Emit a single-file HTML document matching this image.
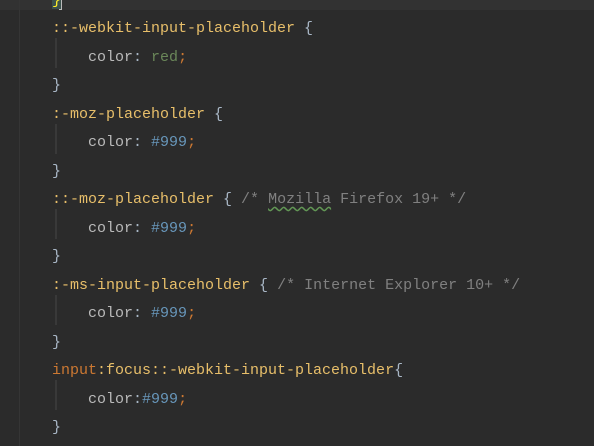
<!DOCTYPE html>
<html><head><style>
html,body{margin:0;padding:0;}
body{width:594px;height:446px;background:#2b2b2b;overflow:hidden;position:relative;font-family:"Liberation Mono",monospace;font-size:15px;}
.top{position:absolute;left:0;top:0;width:594px;height:10px;background:#323232;}
.gut{position:absolute;left:19px;top:0;width:1px;height:446px;background:#353535;}
.code{position:absolute;left:52px;top:-13.5px;}
.l{height:28.5px;line-height:28.5px;white-space:pre;color:#a9b7c6;}
.s{color:#e8bf6a}.o{color:#cc7832}.g{color:#6a8759}.n{color:#6897bb}.c{color:#808080}.p{color:#bababa}
.ig{position:absolute;left:55px;width:2px;background:#393939;}
.hl{background:#3b514d;color:#ffef28}
.w{text-decoration:underline wavy #629755;text-underline-offset:3px;}
</style></head><body>
<div class="top"></div>
<div class="gut"></div>
<div style="position:absolute;left:59px;top:0;width:3px;height:10px;background:#bbb"></div>
<div class="ig" style="top:38px;height:30px"></div>
<div class="ig" style="top:124px;height:30px"></div>
<div class="ig" style="top:209px;height:30px"></div>
<div class="ig" style="top:295px;height:30px"></div>
<div class="ig" style="top:380px;height:30px"></div>
<div class="code">
<div class="l"><span class="hl">}</span></div>
<div class="l"><span class="s">::-webkit-input-placeholder</span> {</div>
<div class="l">    <span class="p">color</span>: <span class="g">red</span><span class="o">;</span></div>
<div class="l">}</div>
<div class="l"><span class="s">:-moz-placeholder</span> {</div>
<div class="l">    <span class="p">color</span>: <span class="n">#999</span><span class="o">;</span></div>
<div class="l">}</div>
<div class="l"><span class="s">::-moz-placeholder</span> { <span class="c">/* <span class="w">Mozilla</span> Firefox 19+ */</span></div>
<div class="l">    <span class="p">color</span>: <span class="n">#999</span><span class="o">;</span></div>
<div class="l">}</div>
<div class="l"><span class="s">:-ms-input-placeholder</span> { <span class="c">/* Internet Explorer 10+ */</span></div>
<div class="l">    <span class="p">color</span>: <span class="n">#999</span><span class="o">;</span></div>
<div class="l">}</div>
<div class="l"><span class="o">input</span><span class="s">:focus::-webkit-input-placeholder</span>{</div>
<div class="l">    <span class="p">color</span>:<span class="n">#999</span><span class="o">;</span></div>
<div class="l">}</div>
</div>
</body></html>
